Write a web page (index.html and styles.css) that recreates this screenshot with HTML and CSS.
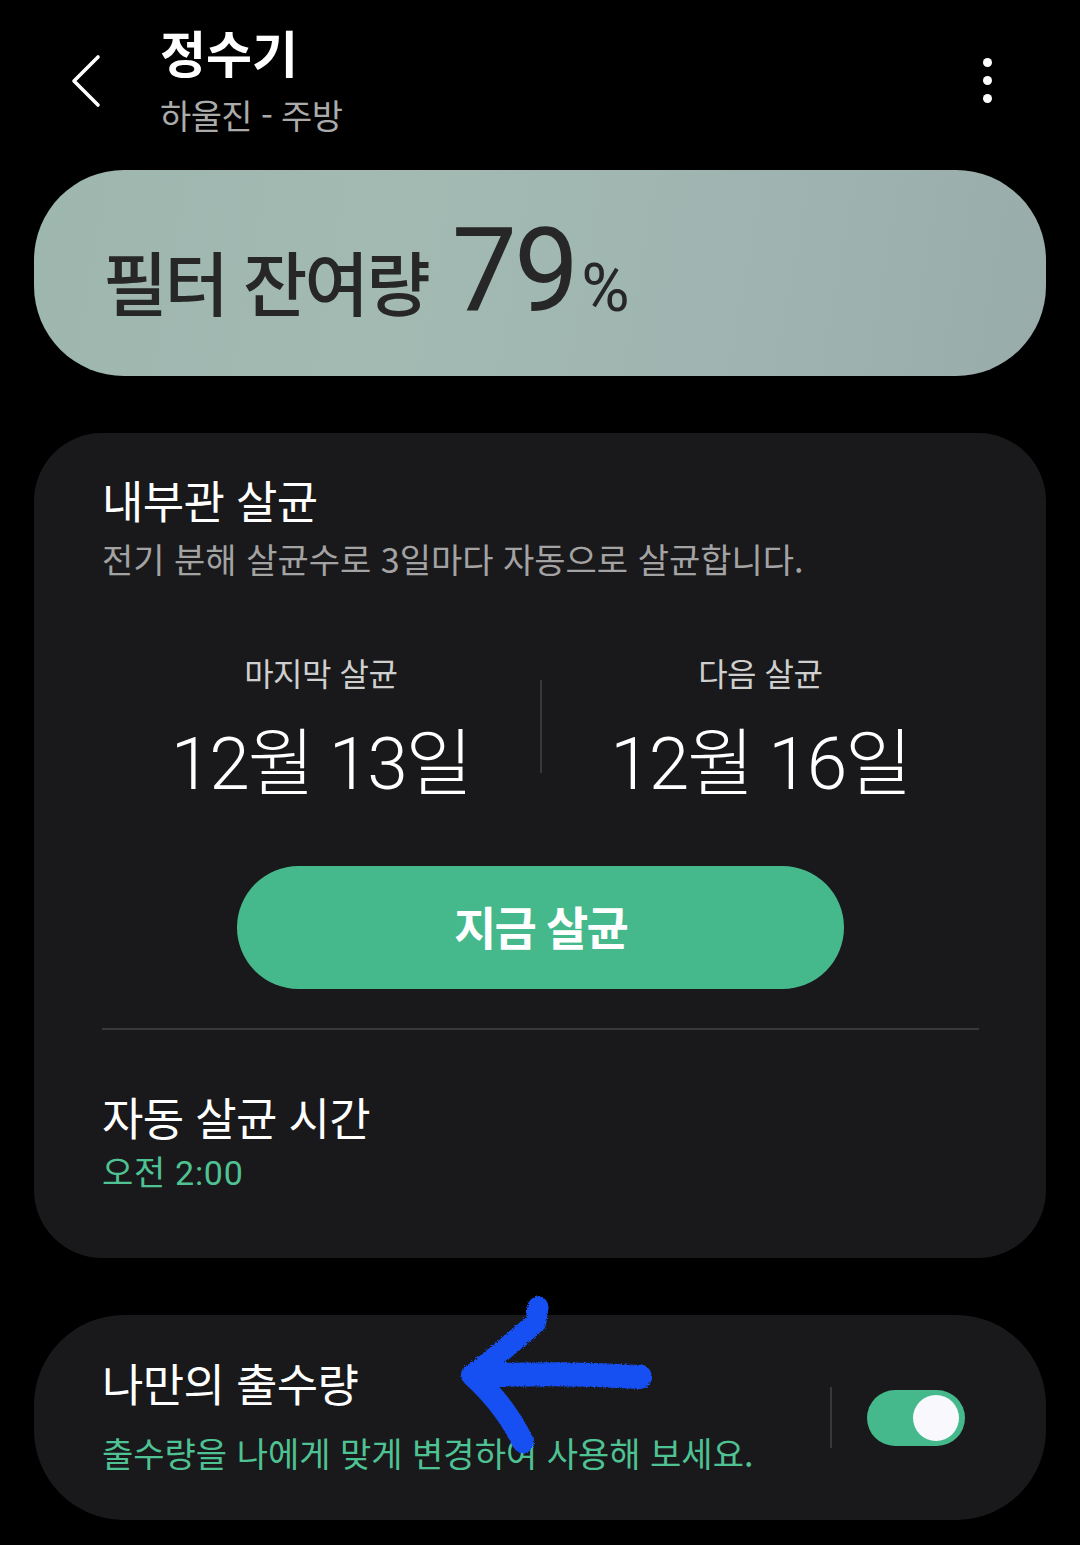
FILE: index.html
```html
<!DOCTYPE html>
<html lang="ko">
<head>
<meta charset="utf-8">
<title>정수기</title>
<link rel="stylesheet" href="styles.css">
</head>
<body>
<div class="page">
  <header class="appbar">
    <button class="back" aria-label="뒤로">
      <svg width="32" height="54" viewBox="0 0 32 54"><path d="M28 3 L4 27 L28 51" fill="none" stroke="#fff" stroke-width="3.6" stroke-linecap="round" stroke-linejoin="round"/></svg>
    </button>
    <div class="titles">
      <h1 class="title">정수기</h1>
      <div class="subtitle">하울진 - 주방</div>
    </div>
    <button class="more" aria-label="더보기">
      <span class="dot"></span><span class="dot"></span><span class="dot"></span>
    </button>
  </header>

  <section class="filter-card">
    <div class="filter-text">
      <span class="filter-label">필터 잔여량</span><span class="filter-num">79</span><span class="filter-pct">%</span>
    </div>
  </section>

  <section class="card sterilize">
    <h2 class="card-title">내부관 살균</h2>
    <p class="card-desc">전기 분해 살균수로 3일마다 자동으로 살균합니다.</p>
    <div class="dates">
      <div class="date-col">
        <div class="date-label">마지막 살균</div>
        <div class="date-value">12월 13일</div>
      </div>
      <div class="vdivider"></div>
      <div class="date-col">
        <div class="date-label">다음 살균</div>
        <div class="date-value">12월 16일</div>
      </div>
    </div>
    <div class="btn-row">
      <button class="primary-btn">지금 살균</button>
    </div>
    <hr class="hdivider">
    <h2 class="card-title auto-title">자동 살균 시간</h2>
    <div class="accent-text">오전 2:00</div>
  </section>

  <section class="card my-water">
    <div class="mw-text">
      <h2 class="card-title">나만의 출수량</h2>
      <div class="accent-text mw-desc">출수량을 나에게 맞게 변경하여 사용해 보세요.</div>
    </div>
    <div class="mw-divider"></div>
    <div class="toggle on"><span class="knob"></span></div>
  </section>
</div>

<svg class="annotation" width="1080" height="1545" viewBox="0 0 1080 1545" aria-hidden="true">
  <defs>
    <filter id="rough" x="-10%" y="-10%" width="120%" height="120%">
      <feTurbulence type="fractalNoise" baseFrequency="0.9" numOctaves="2" result="n"/>
      <feDisplacementMap in="SourceGraphic" in2="n" scale="4"/>
    </filter>
  </defs>
  <g filter="url(#rough)" fill="none" stroke="#1750f2" stroke-linecap="round" stroke-linejoin="round">
    <path d="M538 1307 L536 1322 Q505 1350 472 1375" stroke-width="21"/>
    <path d="M472 1375 Q505 1405 523 1442" stroke-width="22"/>
    <path d="M476 1376 Q560 1372 640 1377" stroke-width="24"/>
  </g>
</svg>
</body>
</html>
```

FILE: styles.css
```css
* { box-sizing: border-box; }

html, body {
  margin: 0;
  padding: 0;
  background: #000;
}

body {
  width: 1080px;
  height: 1545px;
  overflow: hidden;
  position: relative;
  font-family: "Noto Sans CJK KR", "Noto Sans", sans-serif;
  color: #fff;
}

.page {
  display: flex;
  flex-direction: column;
}

/* App bar */
.appbar {
  height: 170px;
  display: flex;
  align-items: flex-start;
  padding: 21px 0 0 0;
}

.back {
  background: none;
  border: 0;
  padding: 0;
  margin: 33px 0 0 70px;
  width: 32px;
  height: 54px;
  display: block;
}
.back svg { display: block; }

.titles {
  margin-left: 58px;
  flex: 1;
}

.title {
  margin: 0;
  font-size: 50px;
  line-height: 60px;
  font-weight: 700;
  letter-spacing: 0;
  color: #fff;
}

.subtitle {
  margin-top: 14px;
  font-size: 34px;
  line-height: 40px;
  letter-spacing: -0.6px;
  color: #ababab;
}

.more {
  background: none;
  border: 0;
  padding: 0;
  margin: 37px 88px 0 0;
  width: 10px;
  display: flex;
  flex-direction: column;
  align-items: center;
  gap: 9px;
}
.dot {
  width: 9px;
  height: 9px;
  border-radius: 50%;
  background: #fff;
  display: block;
}

/* Filter card */
.filter-card {
  margin: 0 34px;
  height: 206px;
  border-radius: 90px;
  background: linear-gradient(100deg, #9db6ae 0%, #a3bab3 35%, #9fb4b0 70%, #99acaa 100%);
  display: flex;
  align-items: center;
  padding-left: 69px;
}

.filter-text {
  display: flex;
  align-items: baseline;
  color: #272727;
  margin-top: -4px;
}

.filter-label {
  font-size: 70px;
  font-weight: 500;
  letter-spacing: -2.8px;
  line-height: 1;
}

.filter-num {
  font-family: Roboto, "Noto Sans CJK KR", sans-serif;
  font-weight: 400;
  font-size: 116px;
  letter-spacing: -3px;
  line-height: 1;
  margin-left: 24px;
}

.filter-pct {
  font-family: Roboto, "Noto Sans CJK KR", sans-serif;
  font-size: 66px;
  font-weight: 400;
  line-height: 1;
  margin-left: 5px;
  letter-spacing: -2px;
}

/* Cards */
.card {
  margin: 0 34px;
  background: #19191b;
  border-radius: 68px;
}

.sterilize {
  margin-top: 57px;
  padding: 40px 67px 65px 68px;
  display: flex;
  flex-direction: column;
}

.card-title {
  margin: 0;
  font-size: 45px;
  line-height: 54px;
  font-weight: 400;
  letter-spacing: -0.7px;
  color: #fff;
}

.card-desc {
  margin: 12px 0 0 0;
  font-size: 34px;
  line-height: 40px;
  letter-spacing: 0;
  color: #a3a3a3;
}

.dates {
  margin-top: 73px;
  display: grid;
  grid-template-columns: 1fr 2px 1fr;
}

.date-col {
  display: flex;
  flex-direction: column;
  align-items: center;
}

.date-label {
  font-size: 32px;
  line-height: 40px;
  letter-spacing: -0.5px;
  color: #cfcfcf;
}

.date-value {
  margin-top: 32px;
  font-family: Roboto, "Noto Sans CJK KR", sans-serif;
  font-size: 73px;
  line-height: 80px;
  font-weight: 300;
  letter-spacing: -2px;
  color: #fff;
  white-space: nowrap;
}

.vdivider {
  margin-top: 28px;
  height: 93px;
  background: #38383a;
}

.btn-row {
  margin-top: 62px;
  display: flex;
  justify-content: center;
}

.primary-btn {
  width: 607px;
  height: 123px;
  border: 0;
  border-radius: 62px;
  background: #46b98c;
  color: #fff;
  font-family: "Noto Sans CJK KR", sans-serif;
  font-size: 46px;
  font-weight: 700;
  letter-spacing: -1.8px;
  padding: 0 0 6px 0;
}

.hdivider {
  margin: 39px 0 0 0;
  border: 0;
  height: 2px;
  background: #38383a;
}

.auto-title {
  margin-top: 60px;
}

.accent-text {
  margin-top: 9px;
  font-family: Roboto, "Noto Sans CJK KR", sans-serif;
  font-size: 34px;
  line-height: 40px;
  letter-spacing: 0.7px;
  color: #4fc293;
}

/* My water */
.my-water {
  margin-top: 57px;
  height: 205px;
  border-radius: 90px;
  padding: 41px 81px 47px 68px;
  display: flex;
  align-items: center;
}

.mw-text {
  flex: 1;
  align-self: flex-start;
}

.mw-desc {
  margin-top: 23px;
  font-family: "Noto Sans CJK KR", sans-serif;
  letter-spacing: 0;
}

.mw-divider {
  width: 2px;
  height: 61px;
  background: #38383a;
  margin-right: 35px;
  margin-top: 6px;
}

.toggle {
  width: 98px;
  height: 56px;
  border-radius: 28px;
  background: #46b98c;
  display: flex;
  align-items: center;
  justify-content: flex-end;
  padding-right: 6px;
  margin-top: 6px;
}

.knob {
  width: 46px;
  height: 46px;
  border-radius: 50%;
  background: #f9f9fd;
  display: block;
}

/* Hand-drawn annotation overlay */
.annotation {
  position: absolute;
  left: 0;
  top: 0;
  pointer-events: none;
}
```
